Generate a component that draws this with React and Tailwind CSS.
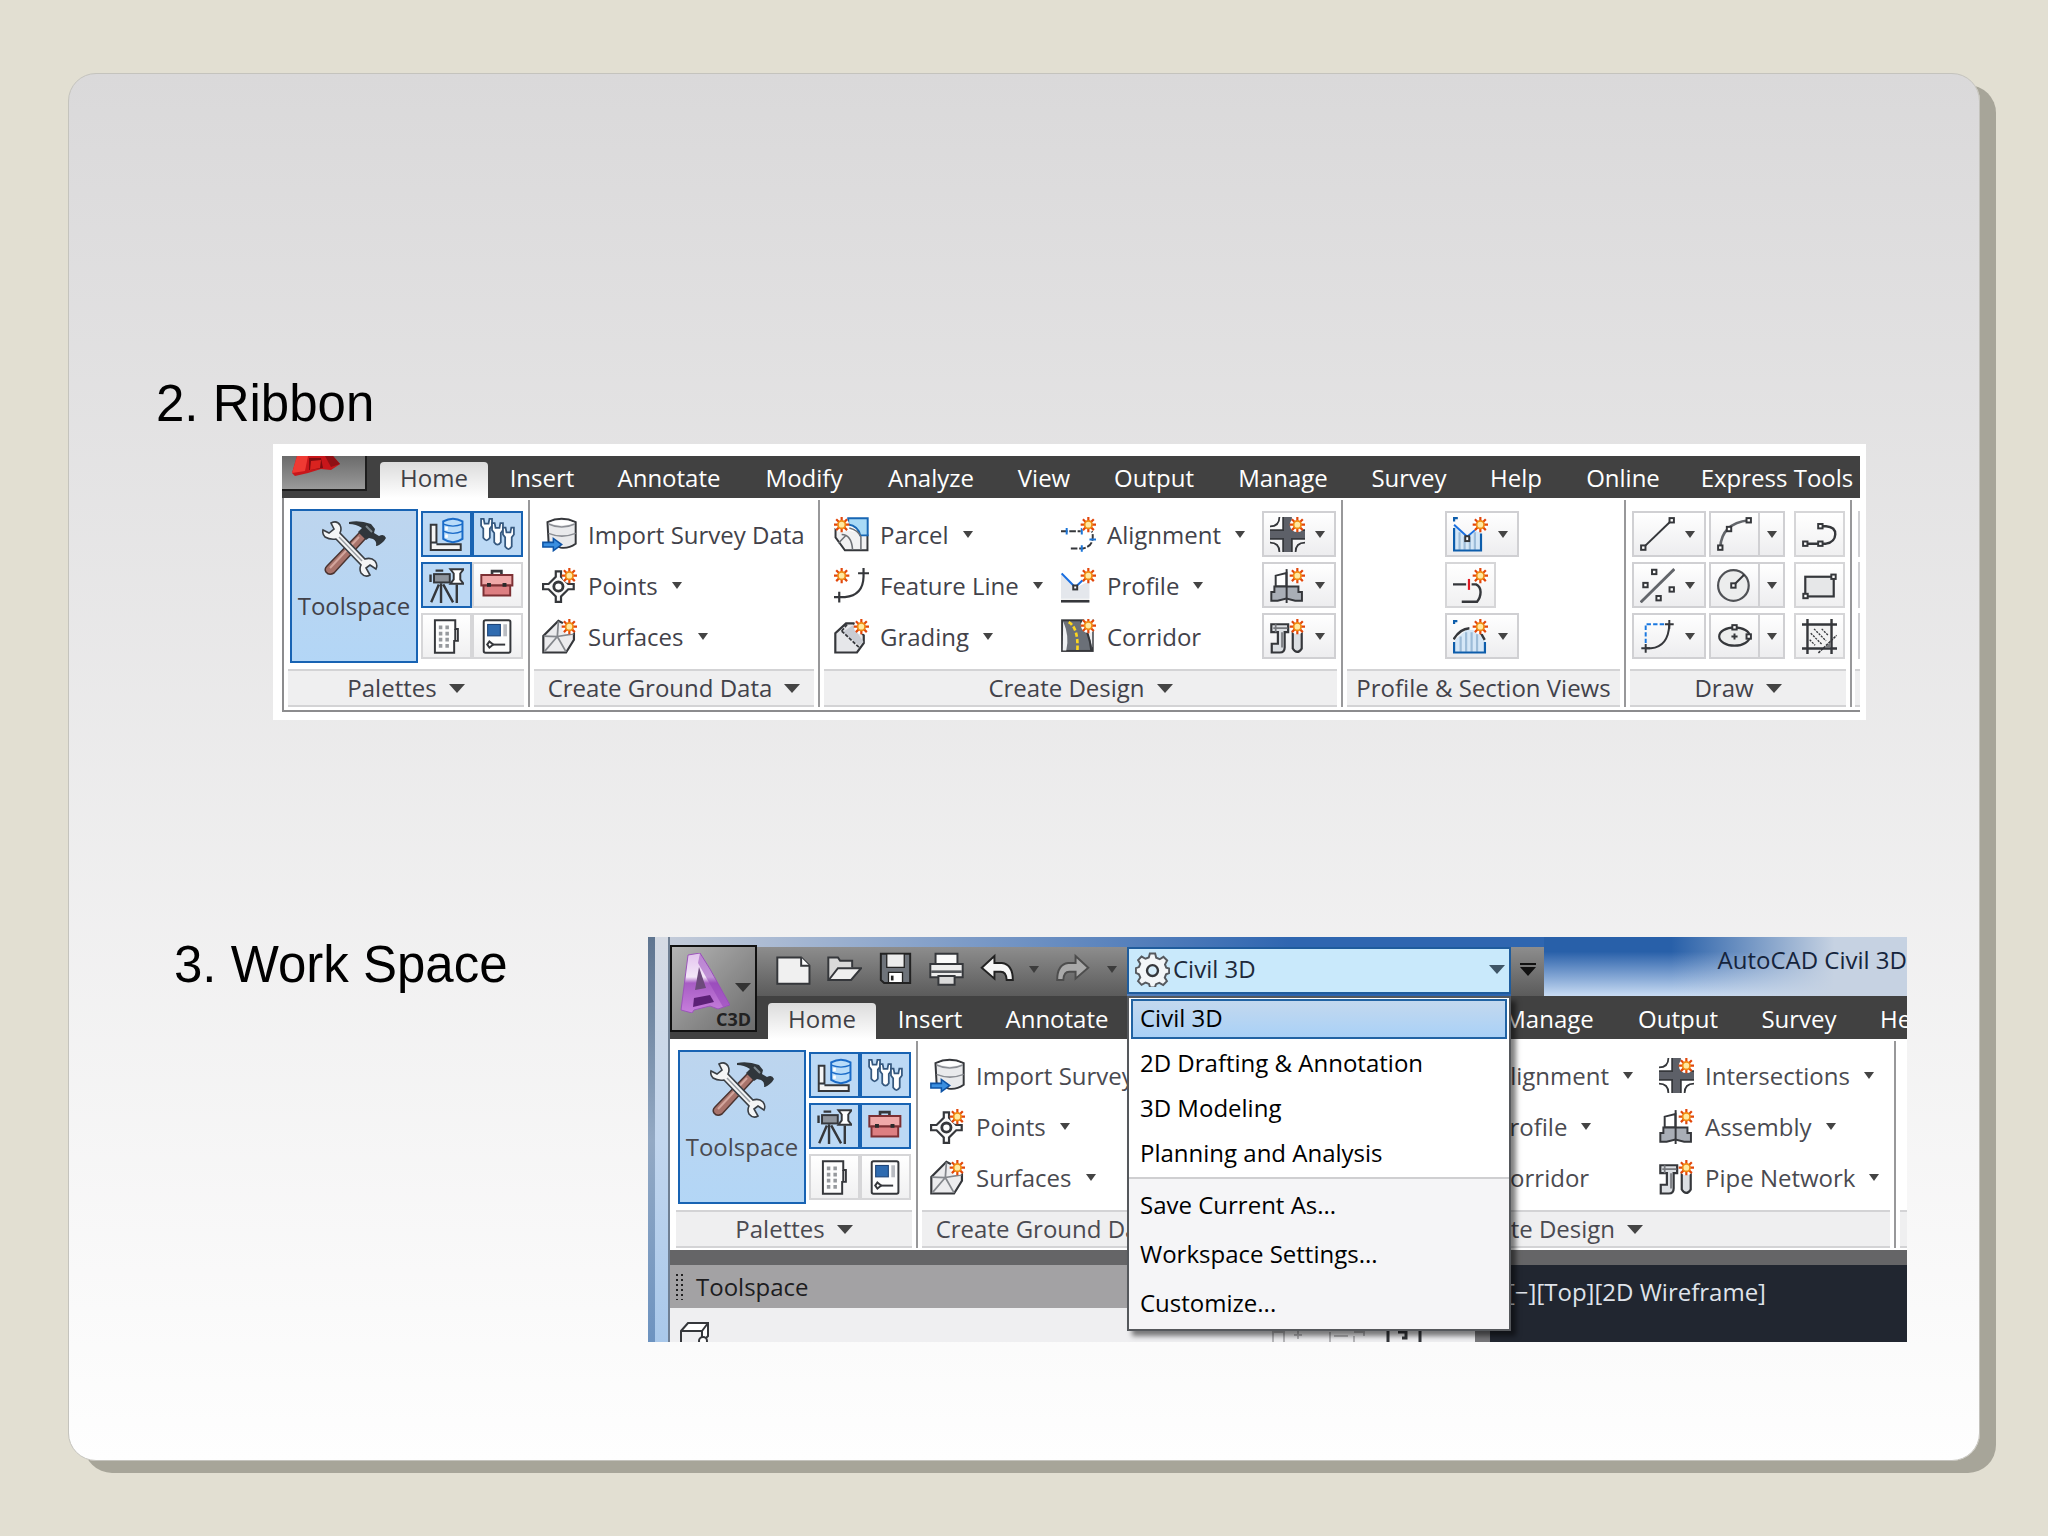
import { useState } from "react";

const RIBBON_TABS = [
  { label: "Insert", width: "w-[108px]" },
  { label: "Annotate", width: "w-[146px]" },
  { label: "Modify", width: "w-[124px]" },
  { label: "Analyze", width: "w-[130px]" },
  { label: "View", width: "w-[96px]" },
  { label: "Output", width: "w-[124px]" },
  { label: "Manage", width: "w-[134px]" },
  { label: "Survey", width: "w-[118px]" },
  { label: "Help", width: "w-[96px]" },
  { label: "Online", width: "w-[118px]" },
  { label: "Express Tools", width: "w-[190px]" },
];

const WORKSPACES = ["Civil 3D", "2D Drafting & Annotation", "3D Modeling", "Planning and Analysis"];
const WORKSPACE_ACTIONS = ["Save Current As...", "Workspace Settings...", "Customize..."];

/* ---------- icons ---------- */

function Icon({ children, className = "h-[35px] w-[35px]" }) {
  return (
    <svg viewBox="0 0 16 16" fill="none" stroke="#35373b" strokeWidth="0.9" className={`shrink-0 ${className}`} aria-hidden="true">
      {children}
    </svg>
  );
}

function Star({ x = 12.5, y = 3.5 }) {
  return (
    <g transform={`translate(${x} ${y})`}>
      <circle r="3.4" fill="#fff" stroke="none" />
      <path d="M0-3.5V3.5M-3.5 0H3.5M-2.5-2.5L2.5 2.5M-2.5 2.5L2.5-2.5" stroke="#e2470b" strokeWidth="1" />
      <circle r="1.7" fill="#ffe9a0" stroke="#f08a12" strokeWidth="0.8" />
    </g>
  );
}

function Cross({ x, y }) {
  return <path d={`M${x - 2} ${y}h4M${x} ${y - 2}v4`} />;
}

function Node({ x, y }) {
  return <rect x={x - 1} y={y - 1} width="2" height="2" fill="#fff" />;
}

function ToolsIcon() {
  return (
    <svg viewBox="0 0 64 58" className="h-[58px] w-[64px]" aria-hidden="true">
      <path d="M38 12L44 18L12 53Q7 56 4 52Q2 49 5 46Z" fill="#a8736b" stroke="#4a3431" strokeWidth="1.5" />
      <path d="M37 17L8 48" stroke="#d3a59c" strokeWidth="2" />
      <path d="M27 2Q38 0 49 4L53 9L52 13L57 16Q62 13 64 18L62 21Q57 26 54 26Q55 21 51 19L47 18L44 20L36 12L40 8Q34 4 27 4Z" fill="#30363b" />
      <path d="M44 6L50 12" stroke="#7c878e" strokeWidth="2" />
      <path
        d="M9 3Q15 0 18 5Q20 9 18 13L43 39Q49 37 53 41Q56 45 54 49L48 45L44 48L48 55Q43 58 39 53Q37 49 39 45L14 19Q8 20 3 17Q0 14 1 10L7 13L12 9Z"
        fill="#f4f5f6"
        stroke="#3a3f45"
        strokeWidth="1.6"
      />
      <path d="M17 17L40 41" stroke="#9a9fa5" strokeWidth="1.5" />
    </svg>
  );
}

function PanoramaIcon() {
  return (
    <Icon>
      <path d="M.8 3.5h2.6v8.2H.8zM.8 11.7v3.4h13.7v-2.6H3.4" fill="#f5f5f5" />
      <path d="M6.500 2Q11-.5 15.300 2V10Q11 13 6.500 10Z" fill="#b9dcf9" stroke="#1a6bc8" />
      <path d="M6.500 3.300Q11 5 15.300 3.300M6.500 6.500Q11 8.500 15.300 6.500" stroke="#1a6bc8" strokeWidth=".6" />
      <path d="M8 4.500v1.500M8 8v1.500" stroke="#fff" strokeWidth="1.2" />
    </Icon>
  );
}

function WrenchesIcon() {
  return (
    <Icon>
      {[
        [0, 0],
        [5, 2],
        [10, 4],
      ].map(([x, y]) => (
        <path
          key={x}
          transform={`translate(${x} ${y})`}
          d="M.5.8V4L1.500 5.300V9.500Q3 11.800 4.500 9.500V5.300L5.500 4V.8H4.300L3.900 3H2.100L1.700.8z"
          fill="#fff"
          stroke="#35587f"
          strokeWidth=".8"
        />
      ))}
    </Icon>
  );
}

function SurveyIcon() {
  return (
    <Icon>
      <path d="M3 1.2h3.5M.7 3v3.4" strokeWidth="1.1" />
      <rect x="2.3" y="2.8" width="7.2" height="3.8" fill="#8e949c" />
      <path d="M5.5 7v9M4.5 7.5L1 15.7M6.5 7.5L11 15.7M12.7 7.5V16" strokeWidth="1.1" />
      <path d="M9.8 .6h6L14.3 2.5v2.8l1.5 1.9h-6l1.5-2V2.5z" fill="#fff" />
    </Icon>
  );
}

function ToolboxIcon() {
  return (
    <Icon>
      <path d="M5.5 3V1.4h4.3V3" strokeWidth="1.2" />
      <path d="M.6 3.2h14.2V8H.6z" fill="#f0a9a9" stroke="#7d3034" />
      <path d="M1.6 8h12.2v4.6H1.6z" fill="#dd7f82" stroke="#7d3034" />
      <path d="M3.2 6.8h1.8v1.8H3.2zM10.3 6.8h1.8v1.8h-1.8z" fill="#2b2b2b" stroke="none" />
    </Icon>
  );
}

function CalculatorIcon() {
  return (
    <Icon>
      <path d="M2.7.6H12v4h1.2V10H11.5v5.4H2.7z" fill="#fdfdfd" />
      <path d="M12 4.6v5" />
      <path d="M5.300 3v10.500M8.300 3v10.500" stroke="#96999d" strokeWidth="1.6" strokeDasharray="1.7 1.1" />
    </Icon>
  );
}

function PropertiesIcon() {
  return (
    <Icon>
      <rect x="1.7" y=".6" width="12.2" height="14.8" rx=".8" fill="#fdfdfd" />
      <rect x="3.5" y="2.5" width="5.8" height="5.2" fill="#2f6bb0" stroke="#1d4478" strokeWidth=".5" />
      <path d="M11.5 2.4v5.500" stroke="#b9bcc2" strokeWidth="1.7" />
      <path d="M4 11.7h7.5" />
      <path d="M4.3 10.3L6 11.7L4.3 13.1L3.3 11.7z" fill="#fff" />
    </Icon>
  );
}

function ImportIcon() {
  return (
    <Icon>
      <path d="M2.5 2.3Q9-.8 15.4 2.3V12.2Q12 14.6 8.5 14L3 11.5Z" fill="#e9eaec" />
      <path d="M3 3.2Q9 6 15 3.2M3 7.5Q9 10 15.4 7.5" stroke="#8b8e94" strokeWidth=".7" />
      <path d="M3.2 2.6Q9 .4 14.8 2.6Q9 5 3.2 2.6Z" fill="#fff" stroke="none" />
      <path d="M.4 11.6h4.8V9.8L9 12.6L5.2 15.4v-1.7H.4z" fill="#3b8fe0" stroke="#0d53a5" strokeWidth=".7" />
    </Icon>
  );
}

function PointsIcon() {
  return (
    <Icon>
      <path d="M6.300 1.500H8.700V4L12 7.300H14.500V9.700H12L8.700 13V15.500H6.300V13L3 9.700H.5V7.300H3L6.300 4z" fill="#fafafa" strokeWidth="1" />
      <circle cx="7.5" cy="8.5" r="2.1" fill="#fff" strokeWidth="1.3" />
      <Star />
    </Icon>
  );
}

function SurfacesIcon() {
  return (
    <Icon>
      <path d="M.6 15.3V7.8L7.5.8L14.6 4.5V9.5L11 15.3z" fill="#ececee" strokeWidth="1" />
      <path d="M7.5 1L7 8L.8 7.8M7 8L11 15M7 8L1 15M7 8L14.4 6.8" stroke="#84878c" strokeWidth=".8" />
      <Star />
    </Icon>
  );
}

function ParcelIcon() {
  return (
    <Icon>
      <path d="M.7 5V9.3L5 15.2H15.3V8" fill="#f1f1f2" />
      <path d="M6.5.6H15.4V8.4H12Q11 4 6.5 3.4z" fill="#a9daf6" stroke="#1766b4" />
      <path d="M3.5 8Q8 8 8.5 15M7 5Q11 6 12.3 9V15M2 12L5.5 8.3" stroke="#6d7075" strokeWidth=".7" />
      <Star x={3.5} y={3.5} />
    </Icon>
  );
}

function FeatureLineIcon() {
  return (
    <Icon>
      <path d="M0 13.3H5Q13.3 12.5 13.5 4V0M11 2.4H16M2.4 10.8V15.8" strokeWidth="1" />
      <Star x={3.5} y={3.5} />
    </Icon>
  );
}

function GradingIcon() {
  return (
    <Icon>
      <path d="M.6 15.3V6.5L5.5 2H9L13.6 7.5V11L10.5 15.3z" fill="#e6e7ea" strokeWidth="1" />
      <path d="M3.8 6L8.5 3L13.5 10.5L11.5 12z" fill="#c9ccd3" stroke="none" />
      <path d="M3.5 5.5L11.5 13M6 2.5L3.5 5.5" strokeWidth=".8" strokeDasharray="1.6 .7" />
      <Star />
    </Icon>
  );
}

function AlignmentIcon() {
  return (
    <Icon>
      <path d="M0 6.5H9M4.5 14.4H10Q14.3 13.5 14.5 9.5T12.5 6" strokeDasharray="3 .8" />
      <path d="M2.6 5v3M9.5 5v3M9.5 12.9v3M13 10.3h3" stroke="#1a74d8" />
      <Star />
    </Icon>
  );
}

function ProfileIcon() {
  return (
    <Icon>
      <path d="M0 3L6.5 9L13 6V14H0z" fill="#e4e7ec" stroke="none" />
      <path d="M.3 2.5L6.5 8.8L10 5.5" stroke="#1a6fe0" />
      <path d="M0 15.2H13" strokeWidth="1.2" />
      <rect x="5.6" y="8" width="1.8" height="1.8" fill="#fff" />
      <Star />
    </Icon>
  );
}

function CorridorIcon() {
  return (
    <Icon>
      <rect x=".5" y=".6" width="14" height="14" fill="#6b7078" />
      <path d="M1 1Q4 8 2.4 14.4H.8z" fill="#eef0f2" stroke="none" />
      <path d="M9 1Q13 6 14.3 13V1z" fill="#eef0f2" stroke="none" />
      <path d="M9 1Q13 6 13.8 14.4" />
      <path d="M3.5 1.4Q8 4 7.5 14.4" stroke="#ffd71e" strokeWidth="1.2" strokeDasharray="2 1" />
      <Star y={3} />
    </Icon>
  );
}

function IntersectionIcon() {
  return (
    <Icon>
      <path d="M6 0h4v6h6v4h-6v6H6v-6H0V6h6z" fill="#5d6068" stroke="none" />
      <path d="M6 0V6H0M0 10H6V16M10 16V10H16M10 6H16" strokeWidth=".8" />
      <path d="M4.3 0Q4.3 4.3 0 4.3M0 11.7Q4.3 11.7 4.3 16M11.7 16Q11.7 11.7 16 11.7" strokeWidth=".8" />
      <Star />
    </Icon>
  );
}

function AssemblyIcon() {
  return (
    <Icon>
      <path d="M2.6 8.5V3.5L7.5 2.3V8.5z" fill="#fff" />
      <path d="M.6 11H2V8.500H13V11H14.600V15H11.500L7.500 14L3.500 15H.6z" fill="#a9aeb6" />
      <path d="M7.6.5V16" />
      <Star />
    </Icon>
  );
}

function PipeIcon() {
  return (
    <Icon>
      <path d="M.6 2.4H8.3V6H6.7V13Q6.7 15.3 4.5 15.3H.8V11.3H3.6V6H.6z" fill="#dcdfe3" strokeWidth="1" />
      <path d="M2.6 2.4V6M1.5 4.2H8M5.5 6V13" stroke="#77797e" strokeWidth=".8" />
      <path d="M10.4 5.5V13.5Q12.4 16.6 14.5 13.5V5.5z" fill="#dcdfe3" strokeWidth="1" />
      <Star />
    </Icon>
  );
}

function ProfileViewIcon() {
  return (
    <Icon>
      <path d="M.4 3.5L6.5 9L12.5 5V15H.4z" fill="#d5e7f7" stroke="none" />
      <path d="M3 7V15M5.3 9V15M7.7 9V15M10 7V15" stroke="#9dbcd8" strokeWidth="1" />
      <path d="M.5 5V15.3H12.8V7.5M.5 2V.5H2.2" stroke="#0d5dab" strokeWidth="1" />
      <path d="M.5 3.5L6.5 9L10 6" stroke="#1a6fe0" />
      <rect x="5.6" y="8.8" width="1.8" height="2.2" fill="#fff" />
      <Star />
    </Icon>
  );
}

function SampleLinesIcon() {
  return (
    <Icon>
      <path d="M0 7.5H6M8.5 7.5H10.5Q12.6 8.5 12.6 11T11 15.4H4" strokeWidth="1.1" />
      <path d="M7.3 5V10" stroke="#e01b24" strokeWidth="1" />
      <Star />
    </Icon>
  );
}

function SectionViewIcon() {
  return (
    <Icon>
      <path d="M1 9.5L6 5H10L14.5 9.5V15H1z" fill="#d5e7f7" stroke="none" />
      <path d="M3.5 8V15M6 6V15M8.5 6V15M11 7V15" stroke="#9dbcd8" strokeWidth="1" />
      <path d="M.3 9.3Q3 4.5 7.5 4.2M12.5 6L14.5 9.5" strokeWidth="1.1" />
      <path d="M.5 10.5V15.3H14.6V10.5M.5 2.3V1H2" stroke="#0d5dab" strokeWidth="1" />
      <Star />
    </Icon>
  );
}

function LineIcon() {
  return (
    <Icon>
      <path d="M1.5 14L14.5 1.5" />
      <Node x={1.5} y={14} />
      <Node x={14.5} y={1.5} />
    </Icon>
  );
}

function ConstructionIcon() {
  return (
    <Icon>
      <path d="M.3 15.7L15.7.5" strokeWidth="1.3" stroke="#63666b" />
      <Node x={6.5} y={1.8} />
      <Node x={2.5} y={7.8} />
      <Node x={14.5} y={9.8} />
      <Node x={8.5} y={13.8} />
    </Icon>
  );
}

function CurveIcon() {
  return (
    <Icon>
      <path d="M2.6 11V2.4H11" stroke="#1a78e0" strokeDasharray="2 1" />
      <path d="M2.6 13.4H5Q13 12.6 13.4 2.4" />
      <Cross x={2.6} y={13.4} />
      <Cross x={13.4} y={2.4} />
    </Icon>
  );
}

function ArcIcon() {
  return (
    <Icon>
      <path d="M1.5 14Q2 3 14.5 1.5" strokeWidth="1.2" stroke="#63666b" />
      <Node x={1.5} y={14} />
      <Node x={5.5} y={5.5} />
      <Node x={14.5} y={1.5} />
    </Icon>
  );
}

function CircleIcon() {
  return (
    <Icon>
      <circle cx="7.5" cy="8" r="7" fill="#eceded" stroke="#505256" strokeWidth="1" />
      <path d="M7.5 8L12.5 3" />
      <Node x={7.5} y={8} />
    </Icon>
  );
}

function EllipseIcon() {
  return (
    <Icon>
      <ellipse cx="8" cy="8" rx="7" ry="4.2" fill="#eceded" strokeWidth="1" />
      <path d="M8 6.6v2.8M6.6 8h2.8" />
      <Node x={8} y={3.8} />
      <Node x={14.5} y={8} />
    </Icon>
  );
}

function PolylineIcon() {
  return (
    <Icon>
      <path d="M8 4.2H11Q15.4 4.5 15.2 8T11 12.2H1.5" strokeWidth="1.1" />
      <Node x={8.4} y={4.2} />
      <Node x={1.5} y={12.2} />
      <Node x={8.4} y={12.2} />
    </Icon>
  );
}

function RectangleIcon() {
  return (
    <Icon>
      <rect x="1.5" y="4" width="13" height="9" fill="#e6e7e8" strokeWidth="1" />
      <Node x={14.4} y={4} />
      <Node x={1.6} y={12.8} />
    </Icon>
  );
}

function HatchIcon() {
  return (
    <Icon>
      <path d="M2.5 2.5H13.5V13.5H2.5z" fill="#f2f2f2" stroke="none" />
      <path d="M0 2.5H16M0 13.5H16M2.5 0V16M13.5 0V16" strokeWidth="1.1" />
      <path d="M3.500 9.500L6 12M4 6.500L9 11.500M5.500 4.500L11 10M9 4.500L12 7.500" strokeWidth=".6" strokeDasharray="1 .5" />
      <path d="M7.500 15.500L15.800 7.500" strokeWidth=".7" strokeDasharray="1.2 .4" />
      <path d="M13 10.500V13H10.500z" fill="#77797c" stroke="none" />
    </Icon>
  );
}

function NewFileIcon() {
  return (
    <Icon>
      <path d="M.6 2.5H11.5L15.3 6.3V14.5H.6z" fill="#f0f0f0" />
      <path d="M11.5 2.5V6.3H15.3" fill="#fff" />
    </Icon>
  );
}

function OpenIcon() {
  return (
    <Icon>
      <path d="M.6 12.8V2.5H5L6 4H11.5V7" fill="#d9d9d9" />
      <path d="M.8 12.8L5 7.4H15.6L11 12.8z" fill="#efefef" />
    </Icon>
  );
}

function SaveIcon() {
  return (
    <Icon>
      <path d="M1.3.8H14.7V14.2H2.8L1.3 12.8z" fill="#6e737a" stroke="#222" />
      <path d="M4 .8H12V7H4z" fill="#ececec" stroke="#222" strokeWidth=".6" />
      <path d="M4.8 9.3H11.2V14H4.8z" fill="#fff" stroke="#222" strokeWidth=".6" />
      <path d="M6.5 10.8V13" stroke="#222" strokeWidth="1.2" />
    </Icon>
  );
}

function PrintIcon() {
  return (
    <Icon>
      <path d="M3 5.5V.8H13V5.5" fill="#fafafa" />
      <path d="M.6 5.5H15.4V11.5H.6z" fill="#ededed" />
      <path d="M1 9h14" stroke="#55585c" strokeWidth="1.2" />
      <path d="M4.3 11H11.7V15H4.3z" fill="#dadada" />
    </Icon>
  );
}

function UndoIcon({ faded }) {
  return (
    <Icon>
      <path
        transform={faded ? "translate(16 0) scale(-1 1)" : undefined}
        d="M.8 7.2L6.6 1.8V5H10Q15 5.6 15 12.8H12.2Q12 9 9.5 9H6.6V12.2z"
        fill={faded ? "#a9a9a9" : "#f7f7f7"}
        stroke={faded ? "#4d4d4d" : "#222"}
      />
    </Icon>
  );
}

function GearIcon() {
  return (
    <Icon>
      <path
        d="M6.8.7h2.4l.5 1.9 1.6.7L13 2.2l1.7 1.7-1 1.8.6 1.5 1.3.4v2l-1.4.6-.6 1.5 1 1.6-1.7 1.8-1.8-1-1.5.6-.5 1.5H6.9l-.5-1.6-1.6-.6-1.8 1-1.6-1.7 1-1.7L1.800 10.200.4 9.500v-2.100l1.400-.5.6-1.500-1-1.700L3 2.100l1.800 1 1.500-.6z"
        fill="#f3f6f8"
        stroke="#55595e"
      />
      <circle cx="8" cy="8.500" r="2.500" fill="#d6edfa" strokeWidth="1.100" />
    </Icon>
  );
}

function PurpleLogo() {
  return (
    <svg viewBox="0 0 50 60" className="h-[60px] w-[50px]" aria-hidden="true">
      <defs>
        <linearGradient id="purpleLogo" x1="0" y1="0" x2="0" y2="1">
          <stop offset="0" stopColor="#e3c3ee" />
          <stop offset=".4" stopColor="#f3e6f8" />
          <stop offset=".5" stopColor="#a75cc4" />
          <stop offset="1" stopColor="#c77fdc" />
        </linearGradient>
      </defs>
      <path d="M8 2L20 0L30 16L50 52L38 56L30 53L14 57L12 60L1 57z" fill="url(#purpleLogo)" stroke="#9b55ba" strokeWidth="1" />
      <path d="M20 0L30 16L50 52L43 54L18 10z" fill="#8f3fb5" opacity=".5" />
      <path d="M19 14L26 35L15 37z" fill="#6d4a7c" />
      <path d="M14 45L30 42L34 49L13 54z" fill="#5c2076" />
    </svg>
  );
}

function RedLogo() {
  return (
    <svg viewBox="0 0 50 22" className="ml-[9px] h-[22px] w-[50px]" aria-hidden="true">
      <path d="M6 0H42L49 8L40 14L30 13L17 17L4 20L1 17z" fill="#c8161a" />
      <path d="M6 0H17L14 15L1 17z" fill="#ef3a33" />
      <path d="M18 2H30L32 12L18 14z" fill="#7d0c10" />
      <path d="M20 5L30 4L29 12L19 14z" fill="#d9231f" />
      <path d="M34 0H42L49 8L40 11z" fill="#8f1014" />
    </svg>
  );
}

/* ---------- ribbon parts ---------- */

function Caret({ big, className = "text-[#444]" }) {
  return big ? (
    <svg viewBox="0 0 16 9" className={`h-[9px] w-[16px] shrink-0 ${className}`} aria-hidden="true">
      <path d="M0 0H16L8 9z" fill="currentColor" />
    </svg>
  ) : (
    <svg viewBox="0 0 10 7" className={`h-[7px] w-[10px] shrink-0 ${className}`} aria-hidden="true">
      <path d="M0 0H10L5 7z" fill="currentColor" />
    </svg>
  );
}

function Tab({ children, width }) {
  return (
    <button type="button" role="tab" className={`h-[36px] shrink-0 pb-1 text-center text-white ${width}`}>
      {children}
    </button>
  );
}

function HomeTab() {
  return (
    <button
      type="button"
      role="tab"
      aria-selected="true"
      className="h-[36px] w-[108px] shrink-0 rounded-t-sm bg-linear-to-b from-[#dcdcdc] to-white pb-1 text-center text-[#3f3f46]"
    >
      Home
    </button>
  );
}

function Panel({ title, arrow = true, width, children }) {
  return (
    <section className={`mt-[2px] flex h-[207px] flex-col border-r-2 border-[#98989a] ${width}`}>
      <div className="flex h-[169px] pt-[9px]">{children}</div>
      <button
        type="button"
        className="mx-1 flex h-[38px] items-center justify-center gap-3 border-y-2 border-[#d3d3d5] bg-[#efeff0] whitespace-nowrap"
      >
        {title}
        {arrow && <Caret big />}
      </button>
    </section>
  );
}

function Command({ icon, label, arrow = true }) {
  return (
    <button type="button" className="flex h-[51px] items-center gap-[11px] whitespace-nowrap">
      {icon}
      <span className="flex items-center gap-[14px]">
        {label}
        {arrow && <Caret />}
      </span>
    </button>
  );
}

function SmallButton({ icon, label, active }) {
  return (
    <button
      type="button"
      aria-label={label}
      aria-pressed={active}
      className={`flex h-[46px] w-[51px] items-center justify-center border-2 ${
        active ? "border-[#1863b3] bg-[#bcd9f5]" : "border-[#d6d6d8] bg-linear-to-b from-white to-[#f0f0f1]"
      }`}
    >
      {icon}
    </button>
  );
}

function DropButton({ icon, label, split }) {
  return (
    <button
      type="button"
      aria-label={label}
      className={`flex h-[46px] items-center border-2 border-[#d0d0d3] bg-linear-to-b from-white to-[#ededef] ${split ? "w-[76px]" : "w-[74px]"}`}
    >
      <span className={`flex h-full items-center pl-[6px] ${split ? "w-[49px] border-r-2 border-[#d0d0d3]" : "w-[51px]"}`}>{icon}</span>
      <span className={split ? "pl-[7px]" : ""}>
        <Caret />
      </span>
    </button>
  );
}

function PalettesPanel({ toolboxActive }) {
  return (
    <Panel title="Palettes" width="w-[246px] shrink-0">
      <div className="flex gap-[3px] pl-[6px]">
        <button
          type="button"
          className="flex h-[154px] w-[128px] flex-col items-center gap-[13px] border-2 border-[#1863b3] bg-linear-to-b from-[#bdd5ee] to-[#b3d6f6] pt-[9px]"
        >
          <ToolsIcon />
          Toolspace
        </button>
        <div className="grid grid-cols-2 content-start gap-y-[5px] pt-[2px]">
          <SmallButton label="Panorama" active icon={<PanoramaIcon />} />
          <SmallButton label="Toolspace settings" active icon={<WrenchesIcon />} />
          <SmallButton label="Survey" active icon={<SurveyIcon />} />
          <SmallButton label="Toolbox" active={toolboxActive} icon={<ToolboxIcon />} />
          <SmallButton label="Calculator" icon={<CalculatorIcon />} />
          <SmallButton label="Properties" icon={<PropertiesIcon />} />
        </div>
      </div>
    </Panel>
  );
}

function GroundDataPanel() {
  return (
    <Panel title="Create Ground Data" width="w-[290px] shrink-0">
      <div className="flex flex-col pl-3">
        <Command icon={<ImportIcon />} label="Import Survey Data" arrow={false} />
        <Command icon={<PointsIcon />} label="Points" />
        <Command icon={<SurfacesIcon />} label="Surfaces" />
      </div>
    </Panel>
  );
}

function DesignPanel({ wide }) {
  return (
    <Panel title="Create Design" width={wide ? "w-[688px] shrink-0" : "w-[523px] shrink-0"}>
      <div className="flex w-[241px] shrink-0 flex-col pl-[14px]">
        <Command icon={<ParcelIcon />} label="Parcel" />
        <Command icon={<FeatureLineIcon />} label="Feature Line" />
        <Command icon={<GradingIcon />} label="Grading" />
      </div>
      <div className="flex w-[201px] shrink-0 flex-col">
        <Command icon={<AlignmentIcon />} label="Alignment" />
        <Command icon={<ProfileIcon />} label="Profile" />
        <Command icon={<CorridorIcon />} label="Corridor" arrow={false} />
      </div>
      {wide ? (
        <div className="flex flex-col pl-[9px]">
          <Command icon={<IntersectionIcon />} label="Intersections" />
          <Command icon={<AssemblyIcon />} label="Assembly" />
          <Command icon={<PipeIcon />} label="Pipe Network" />
        </div>
      ) : (
        <div className="flex flex-col gap-[5px] pt-[2px]">
          <DropButton label="Intersections" icon={<IntersectionIcon />} />
          <DropButton label="Assembly" icon={<AssemblyIcon />} />
          <DropButton label="Pipe Network" icon={<PipeIcon />} />
        </div>
      )}
    </Panel>
  );
}

function Ribbon() {
  return (
    <div className="mr-[113px] ml-[204px] bg-white pt-[12px] pr-[6px] pb-[8px] pl-[9px] text-[#42424a]">
      <div className="overflow-hidden">
        <div role="tablist" className="flex h-[42px] items-end bg-[#414141]">
          <div className="mr-[13px] h-full w-[85px] shrink-0">
            <div className="h-[35px] border-r-2 border-b-2 border-[#1d1d1d] bg-linear-to-b from-[#6b6b6b] to-[#9a9a9a]">
              <RedLogo />
            </div>
          </div>
          <HomeTab />
          {RIBBON_TABS.map((t) => (
            <Tab key={t.label} width={t.width}>
              {t.label}
            </Tab>
          ))}
        </div>
        <div className="flex border-b-2 border-l-2 border-[#8c8c8e] pb-[3px]">
          <PalettesPanel />
          <GroundDataPanel />
          <DesignPanel />
          <Panel title="Profile & Section Views" arrow={false} width="min-w-[270px] flex-1">
            <div className="mx-auto flex w-[78px] flex-col gap-[5px] pt-[2px]">
              <DropButton label="Profile View" icon={<ProfileViewIcon />} />
              <SmallButton label="Sample Lines" icon={<SampleLinesIcon />} />
              <DropButton label="Section Views" icon={<SectionViewIcon />} />
            </div>
          </Panel>
          <Panel title="Draw" width="w-[226px] shrink-0">
            <div className="flex pt-[2px] pl-[6px]">
              <div className="mr-[3px] flex flex-col gap-[5px]">
                <DropButton label="Line" icon={<LineIcon />} />
                <DropButton label="Construction Line" icon={<ConstructionIcon />} />
                <DropButton label="Curve" icon={<CurveIcon />} />
              </div>
              <div className="mr-[9px] flex flex-col gap-[5px]">
                <DropButton split label="Arc" icon={<ArcIcon />} />
                <DropButton split label="Circle" icon={<CircleIcon />} />
                <DropButton split label="Ellipse" icon={<EllipseIcon />} />
              </div>
              <div className="flex flex-col gap-[5px]">
                <SmallButton label="Polyline" icon={<PolylineIcon />} />
                <SmallButton label="Rectangle" icon={<RectangleIcon />} />
                <SmallButton label="Hatch" icon={<HatchIcon />} />
              </div>
            </div>
          </Panel>
          <div className="flex w-[8px] shrink-0 flex-col items-end gap-[5px] pt-[13px]">
            <div className="h-[46px] w-[2px] bg-[#d0d0d3]" />
            <div className="h-[46px] w-[2px] bg-[#d0d0d3]" />
            <div className="h-[46px] w-[2px] bg-[#d0d0d3]" />
            <div className="mt-[5px] h-[38px] w-[5px] border-y-2 border-[#d3d3d5] bg-[#efeff0]" />
          </div>
        </div>
      </div>
    </div>
  );
}

/* ---------- workspace window ---------- */

function WorkspaceMenu({ current, onPick }) {
  return (
    <div
      role="menu"
      className="absolute top-[59px] left-[457px] w-[384px] border-2 border-[#55585c] bg-white text-black shadow-[5px_5px_5px_rgba(0,0,0,0.5)]"
    >
      <div className="px-[2px] pt-[1px]">
        {WORKSPACES.map((name) => (
          <button
            key={name}
            type="button"
            role="menuitem"
            onClick={() => onPick(name)}
            className={`flex w-full items-center px-[7px] pb-[3px] ${
              name === current
                ? "mb-[3px] h-[40px] border-2 border-[#2163a3] bg-linear-to-b from-[#c3d8ee] to-[#a9d1f7]"
                : "h-[45px] border-x-2 border-transparent"
            }`}
          >
            {name}
          </button>
        ))}
      </div>
      <div className="border-t-2 border-[#cfcfd1] bg-[#f5f5f7] px-[2px] pt-[3px]">
        {WORKSPACE_ACTIONS.map((name) => (
          <button
            key={name}
            type="button"
            role="menuitem"
            className="flex h-[49px] w-full items-center border-x-2 border-transparent px-[7px] pb-[3px]"
          >
            {name}
          </button>
        ))}
      </div>
    </div>
  );
}

function QuickAccessBar({ workspace, onPick }) {
  return (
    <div className="flex h-[59px] bg-linear-to-r from-[#c3cbd9] via-[#2f66b0] via-50% to-[#2f66b0] pt-[10px]">
      <div className="flex w-[457px] shrink-0 items-center bg-linear-to-b from-[#8d8d8d] to-[#5b5b5b] pb-1 pl-[106px]">
        <div className="flex items-center gap-4">
          <button type="button" aria-label="New"><NewFileIcon /></button>
          <button type="button" aria-label="Open"><OpenIcon /></button>
          <button type="button" aria-label="Save"><SaveIcon /></button>
          <button type="button" aria-label="Plot"><PrintIcon /></button>
          <button type="button" aria-label="Undo" className="flex items-center gap-[14px]">
            <UndoIcon />
            <Caret className="text-[#3c3c3c]" />
          </button>
          <button type="button" aria-label="Redo" className="flex items-center gap-[17px]">
            <UndoIcon faded />
            <Caret className="text-[#3c3c3c]" />
          </button>
        </div>
      </div>
      <div className="flex h-[47px] w-[384px] shrink-0 items-center border-2 border-[#1f5c9c] bg-[#c9e9fb] pr-1 pb-[3px] pl-[6px] text-[#1e2a3a]">
        <GearIcon />
        <select
          aria-label="Workspace"
          value={workspace}
          onChange={(e) => onPick(e.target.value)}
          className="ml-[3px] flex-1 appearance-none bg-transparent"
        >
          {WORKSPACES.map((name) => (
            <option key={name}>{name}</option>
          ))}
        </select>
        <Caret big className="text-[#3f5566]" />
      </div>
      <button
        type="button"
        aria-label="Customize toolbar"
        className="flex w-[33px] shrink-0 items-center justify-center bg-linear-to-b from-[#8d8d8d] to-[#5b5b5b] pb-[5px]"
      >
        <svg viewBox="0 0 16 13" className="h-[13px] w-[16px]" aria-hidden="true">
          <path d="M0 0H16V2H0zM0 4H16L8 13z" fill="#111" />
        </svg>
      </button>
      <div className="-mt-[10px] flex-1 bg-linear-to-b from-[#2860a9] from-25% to-[#c9dcf3] text-right">
        <div className="h-full bg-linear-to-r from-transparent from-35% to-[#c6d2e2] to-80% pt-[8px] leading-[30px] whitespace-nowrap text-[#15243c]">
          AutoCAD Civil 3D
        </div>
      </div>
    </div>
  );
}

function WorkspaceWindow() {
  const [workspace, setWorkspace] = useState("Civil 3D");

  return (
    <div className="relative mr-[72px] flex h-[405px] flex-1 overflow-hidden text-[#4a4a50]">
      <div className="w-[7px] shrink-0 bg-linear-to-b from-[#5f7590] via-[#93a9c4] to-[#6d93c0]" />
      <div className="w-[15px] shrink-0 border-r-2 border-[#6f7f93] bg-linear-to-b from-[#d5dae3] via-[#c2d6ee] to-[#a9c8ea]" />
      <div className="relative flex min-w-0 flex-1 flex-col">
        <QuickAccessBar workspace={workspace} onPick={setWorkspace} />
        <div role="tablist" className="flex h-[43px] shrink-0 items-end bg-[#414141] pl-[98px]">
          <HomeTab />
          <Tab width="w-[108px]">Insert</Tab>
          <Tab width="w-[146px]">Annotate</Tab>
          <div className="w-[352px] shrink-0" />
          <Tab width="w-[134px]">Manage</Tab>
          <Tab width="w-[124px]">Output</Tab>
          <Tab width="w-[118px]">Survey</Tab>
          <Tab width="w-[96px]">Help</Tab>
        </div>
        <div className="flex h-[211px] shrink-0 overflow-hidden bg-white pl-[2px]">
          <PalettesPanel toolboxActive />
          <GroundDataPanel />
          <DesignPanel wide />
          <div className="min-w-0 flex-1 pt-[171px] pl-1">
            <div className="h-[38px] border-y-2 border-[#d3d3d5] bg-[#efeff0]" />
          </div>
        </div>
        <div className="h-[15px] shrink-0 bg-[#656567]" />
        <div className="flex min-h-0 flex-1">
          <div className="flex w-[805px] shrink-0 flex-col bg-[#efeff1]">
            <div className="flex h-[43px] shrink-0 items-center gap-3 bg-[#a3a2a4] pl-[6px] text-[#1d1d1f]">
              <svg viewBox="0 0 8 26" className="h-[26px] w-[8px]" aria-hidden="true">
                <path d="M1 0V26M6 0V26" stroke="#222" strokeWidth="2" strokeDasharray="2 3" />
              </svg>
              Toolspace
            </div>
            <div className="flex pt-[14px] pl-[10px]">
              <svg viewBox="0 0 30 30" className="h-[30px] w-[30px]" fill="#fff" stroke="#35373b" strokeWidth="2" aria-hidden="true">
                <path d="M1 30V9L8 1H28V14L22 20V9H1M22 9L28 1" />
                <circle cx="23" cy="19" r="4" />
              </svg>
              <svg viewBox="0 0 150 30" className="ml-[562px] h-[30px] w-[150px]" fill="none" stroke="#b5b5b8" strokeWidth="2" aria-hidden="true">
                <path d="M1 20V10H12V20M22 13H30M26 9V17M58 20V10M62 14H76M82 10H92V14M82 20V14" />
                <path d="M116 20V8M148 20V8M126 10H134V16H130" stroke="#35373b" strokeWidth="3" />
              </svg>
            </div>
          </div>
          <div className="w-[15px] shrink-0 bg-[#77777a]" />
          <div className="flex-1 bg-[#212630] pt-[10px] pl-[17px] leading-[34px] whitespace-nowrap text-[#dfe3ea]">[−][Top][2D Wireframe]</div>
        </div>
        <button
          type="button"
          aria-label="Application menu"
          className="absolute top-[8px] left-0 flex h-[87px] w-[87px] items-start border-2 border-[#111] bg-linear-to-br from-[#b5b5b5] to-[#6c6c6c] pt-[6px] pl-[8px]"
        >
          <PurpleLogo />
          <span className="absolute right-[4px] bottom-0 text-[18px] leading-[22px] font-bold text-[#222]">C3D</span>
          <span className="absolute top-[36px] right-[4px] flex">
            <Caret big className="text-[#333]" />
          </span>
        </button>
        <WorkspaceMenu current={workspace} onPick={setWorkspace} />
      </div>
    </div>
  );
}

export default function App() {
  return (
    <div className="min-h-screen bg-[#e2dfd2] px-[68px] pt-[73px] pb-[75px] font-['Open_Sans','Noto_Sans',sans-serif] text-[24px] leading-[30px]">
      <main className="min-h-[1388px] rounded-[28px] border border-[#c4c3bd] bg-linear-to-b from-[#dad9da] to-[#fefefe] pt-[300px] shadow-[16px_12px_0_#a7a599]">
        <h1 className="mb-[10px] pl-[87px] font-['Liberation_Sans',Arial,sans-serif] text-[51px] leading-[60px] text-black">2. Ribbon</h1>
        <Ribbon />
        <div className="mt-[217px] flex">
          <h1 className="w-[579px] shrink-0 pl-[105px] font-['Liberation_Sans',Arial,sans-serif] text-[51px] leading-[56px] text-black">
            3. Work Space
          </h1>
          <WorkspaceWindow />
        </div>
      </main>
    </div>
  );
}
